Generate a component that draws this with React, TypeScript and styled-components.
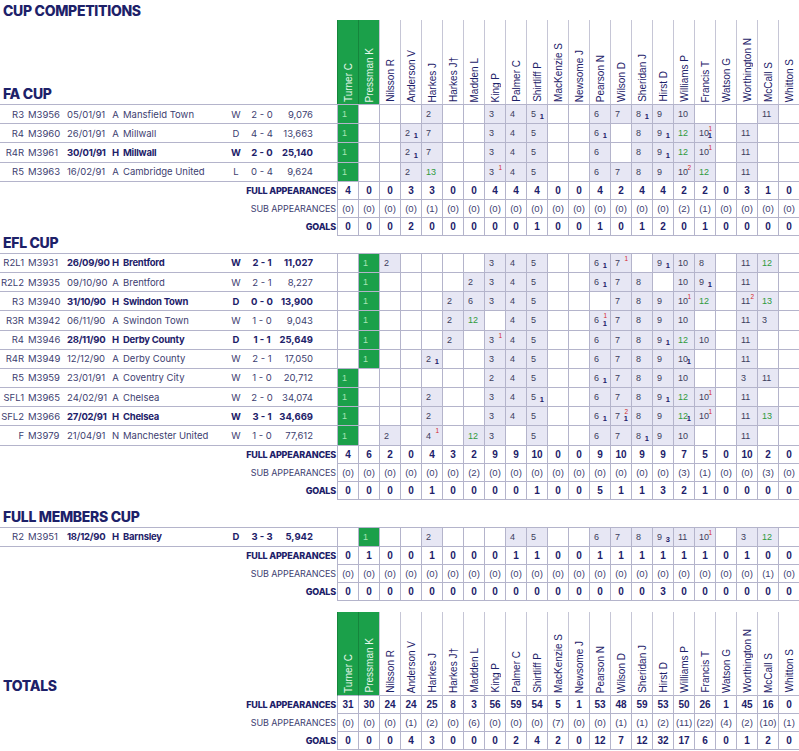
import styled, { createGlobalStyle } from "styled-components"

const NAVY = "#1d2169"
const TEXT = "#3d4070"
const LINE = "#b4b4cb"
const GREEN = "#1ba04a"

const GlobalStyle = createGlobalStyle`
  body {
    margin: 0;
    background: #fff;
    font-family: Inter, "Liberation Sans", sans-serif;
  }
`

const players = [
    "Turner C", "Pressman K", "Nilsson R", "Anderson V", "Harkes J", "Harkes J†",
    "Madden L", "King P", "Palmer C", "Shirtliff P", "MacKenzie S", "Newsome J",
    "Pearson N", "Wilson D", "Sheridan J", "Hirst D", "Williams P", "Francis T",
    "Watson G", "Worthington N", "McCall S", "Whitton S",
]

interface Match {
    round: string
    no: string
    date: string
    venue: string
    opp: string
    res: string
    score: string
    att: string
    cells: string
}

interface Totals {
    full: string
    sub: string
    goals: string
}

const faCup: Match[] = [
    { round: "R3", no: "M3956", date: "05/01/91", venue: "A", opp: "Mansfield Town", res: "W", score: "2 - 0", att: "9,076", cells: "1 . . . 2 . . 3 4 5_1 . . 6 7 8_1 9 10 . . . 11 ." },
    { round: "R4", no: "M3960", date: "26/01/91", venue: "A", opp: "Millwall", res: "D", score: "4 - 4", att: "13,663", cells: "1 . . 2_1 7 . . 3 4 5 . . 6_1 . 8 9_1 g12 10^1_1 . 11 . ." },
    { round: "R4R", no: "M3961", date: "30/01/91", venue: "H", opp: "Millwall", res: "W", score: "2 - 0", att: "25,140", cells: "1 . . 2_1 7 . . 3 4 5 . . 6 . 8 9_1 g12 10^1 . 11 . ." },
    { round: "R5", no: "M3963", date: "16/02/91", venue: "A", opp: "Cambridge United", res: "L", score: "0 - 4", att: "9,624", cells: "1 . . 2 g13 . . 3^1 4 5 . . 6 7 8 9 10^2 g12 . 11 . ." },
]

const eflCup: Match[] = [
    { round: "R2L1", no: "M3931", date: "26/09/90", venue: "H", opp: "Brentford", res: "W", score: "2 - 1", att: "11,027", cells: ". 1 2 . . . . 3 4 5 . . 6_1 7^1 . 9_1 10 8 . 11 g12 ." },
    { round: "R2L2", no: "M3935", date: "09/10/90", venue: "A", opp: "Brentford", res: "W", score: "2 - 1", att: "8,227", cells: ". 1 . . . . 2 3 4 5 . . 6_1 7 8 . 10 9_1 . 11 . ." },
    { round: "R3", no: "M3940", date: "31/10/90", venue: "H", opp: "Swindon Town", res: "D", score: "0 - 0", att: "13,900", cells: ". 1 . . . 2 6 3 4 5 . . . 7 8 9 10^1 g12 . 11^2 g13 ." },
    { round: "R3R", no: "M3942", date: "06/11/90", venue: "A", opp: "Swindon Town", res: "W", score: "1 - 0", att: "9,043", cells: ". 1 . . . 2 g12 . 4 5 . . 6^1_1 7 8 9 10 . . 11 3 ." },
    { round: "R4", no: "M3946", date: "28/11/90", venue: "H", opp: "Derby County", res: "D", score: "1 - 1", att: "25,649", cells: ". 1 . . . 2 . 3^1 4 5 . . 6 7 8 9_1 g12 10 . 11 . ." },
    { round: "R4R", no: "M3949", date: "12/12/90", venue: "A", opp: "Derby County", res: "W", score: "2 - 1", att: "17,050", cells: ". 1 . . 2_1 . . 3 4 5 . . 6 7 8 9 10_1 . . 11 . ." },
    { round: "R5", no: "M3959", date: "23/01/91", venue: "A", opp: "Coventry City", res: "W", score: "1 - 0", att: "20,712", cells: "1 . . . . . . 2 4 5 . . 6_1 7 8 9 10 . . 3 11 ." },
    { round: "SFL1", no: "M3965", date: "24/02/91", venue: "A", opp: "Chelsea", res: "W", score: "2 - 0", att: "34,074", cells: "1 . . . 2 . . 3 4 5_1 . . 6 7 8 9_1 g12 10^1 . 11 . ." },
    { round: "SFL2", no: "M3966", date: "27/02/91", venue: "H", opp: "Chelsea", res: "W", score: "3 - 1", att: "34,669", cells: "1 . . . 2 . . 3 4 5 . . 6_1 7^2_1 8 9 g12_1 10^1 . 11 g13 ." },
    { round: "F", no: "M3979", date: "21/04/91", venue: "N", opp: "Manchester United", res: "W", score: "1 - 0", att: "77,612", cells: "1 . 2 . 4^1 . g12 3 . 5 . . 6 7 8_1 9 10 . . 11 . ." },
]

const fmCup: Match[] = [
    { round: "R2", no: "M3951", date: "18/12/90", venue: "H", opp: "Barnsley", res: "D", score: "3 - 3", att: "5,942", cells: ". 1 . . 2 . . . 4 5 . . 6 7 8 9_3 11 10^1 . 3 g12 ." },
]

const faTotals: Totals = {
    full: "4 0 0 3 3 0 0 4 4 4 0 0 4 2 4 4 2 2 0 3 1 0",
    sub: "0 0 0 0 1 0 0 0 0 0 0 0 0 0 0 0 2 1 0 0 0 0",
    goals: "0 0 0 2 0 0 0 0 0 1 0 0 1 0 1 2 0 1 0 0 0 0",
}
const eflTotals: Totals = {
    full: "4 6 2 0 4 3 2 9 9 10 0 0 9 10 9 9 7 5 0 10 2 0",
    sub: "0 0 0 0 0 0 2 0 0 0 0 0 0 0 0 0 3 1 0 0 3 0",
    goals: "0 0 0 0 1 0 0 0 0 1 0 0 5 1 1 3 2 1 0 0 0 0",
}
const fmTotals: Totals = {
    full: "0 1 0 0 1 0 0 0 1 1 0 0 1 1 1 1 1 1 0 1 0 0",
    sub: "0 0 0 0 0 0 0 0 0 0 0 0 0 0 0 0 0 0 0 0 1 0",
    goals: "0 0 0 0 0 0 0 0 0 0 0 0 0 0 0 3 0 0 0 0 0 0",
}
const grandTotals: Totals = {
    full: "31 30 24 24 25 8 3 56 59 54 5 1 53 48 59 53 50 26 1 45 16 0",
    sub: "0 0 0 1 2 0 6 0 0 0 7 0 0 1 1 2 11 22 4 2 10 1",
    goals: "0 0 0 4 3 0 0 0 2 4 2 0 12 7 12 32 17 6 0 1 2 0",
}

const Page = styled.div`
    width: 799px;
    display: flex;
    flex-direction: column;
`

const Title = styled.h1`
    margin: 0;
    height: 20px;
    padding-left: 3px;
    font-size: 14px;
    line-height: 21px;
    font-weight: 800;
    letter-spacing: -0.3px;
    color: ${NAVY};
`

const Row = styled.div<{ $h: number }>`
    display: grid;
    grid-template-columns: 337px repeat(22, 21px);
    height: ${p => p.$h}px;
    box-sizing: border-box;
`

const HeaderRow = styled(Row)<{ $ruled: boolean }>`
    border-bottom: ${p => (p.$ruled ? `1px solid ${LINE}` : "none")};
`

const SectionTitle = styled.h2<{ $h?: number; $ruled?: boolean }>`
    margin: 0;
    height: ${p => (p.$h ? `${p.$h}px` : "auto")};
    display: flex;
    align-items: flex-end;
    padding: 0 0 3px 3px;
    box-sizing: border-box;
    font-size: 14px;
    line-height: 1;
    font-weight: 800;
    letter-spacing: -0.3px;
    color: ${NAVY};
    border-bottom: ${p => (p.$ruled ? `1px solid ${LINE}` : "none")};
`

const NameCell = styled.div<{ $keeper: boolean; $boxed: boolean }>`
    display: flex;
    align-items: flex-end;
    justify-content: center;
    padding-bottom: 2px;
    border-left: 1px solid ${p => (p.$keeper ? "#15853c" : "#c6c6d6")};
    border-bottom: ${p => (p.$boxed ? `1px solid ${LINE}` : "none")};
    background: ${p => (p.$keeper ? GREEN : "transparent")};
    color: ${p => (p.$keeper ? "#e6f7ea" : NAVY)};
`

const NameText = styled.span`
    writing-mode: vertical-rl;
    text-orientation: sideways;
    transform: rotate(180deg);
    font-family: "Liberation Sans", Arial, sans-serif;
    font-size: 10px;
    white-space: nowrap;
`

const MatchRow = styled(Row)`
    border-bottom: 1px solid ${LINE};
`

const MatchInfo = styled.div<{ $home: boolean }>`
    display: grid;
    grid-template-columns: 24px 42px 160px 20px 32px 35px;
    align-items: center;
    font-size: 9.5px;
    color: ${p => (p.$home ? NAVY : TEXT)};
    white-space: nowrap;
`

const Round = styled.span`
    text-align: right;
    color: ${TEXT};
`

const MatchNo = styled.span`
    padding-left: 4px;
    color: ${TEXT};
`

const Fixture = styled.span<{ $home: boolean }>`
    display: flex;
    align-items: center;
    gap: 4px;
    padding-left: 1px;
    font-weight: ${p => (p.$home ? 700 : 400)};
    letter-spacing: ${p => (p.$home ? "-0.25px" : "0")};
`

const DateText = styled.span`
    width: 41px;
`

const Venue = styled.span`
    width: 7px;
    text-align: center;
`

const Field = styled.span<{ $home: boolean; $align: string }>`
    font-weight: ${p => (p.$home ? 700 : 400)};
    text-align: ${p => p.$align};
`

const PlayerCell = styled.div<{ $fill: "none" | "shade" | "keeper" }>`
    position: relative;
    display: flex;
    align-items: center;
    padding-left: 4px;
    border-left: 1px solid ${LINE};
    background: ${p => (p.$fill === "keeper" ? GREEN : p.$fill === "shade" ? "#e7e7f4" : "transparent")};
    color: ${p => (p.$fill === "keeper" ? "#a7e4b6" : "#3c3d5c")};
    font-family: "Liberation Sans", Arial, sans-serif;
    font-size: 9px;
`

const Num = styled.span<{ $sub: boolean }>`
    color: ${p => (p.$sub ? "#2f9a3d" : "inherit")};
`

const Booked = styled.span`
    position: absolute;
    top: 1px;
    right: 3px;
    font-size: 6.5px;
    color: #d42a2a;
`

const Scored = styled.span`
    position: absolute;
    bottom: 2px;
    right: 3px;
    font-size: 7.5px;
    font-weight: 700;
    color: ${NAVY};
`

const SumLabel = styled.div<{ $bold: boolean }>`
    text-align: right;
    padding-right: 1px;
    font-size: 9px;
    line-height: 18px;
    font-weight: ${p => (p.$bold ? 800 : 400)};
    letter-spacing: ${p => (p.$bold ? "-0.2px" : "-0.1px")};
    color: ${p => (p.$bold ? NAVY : TEXT)};
`

const SumCell = styled.div<{ $bold: boolean; $top: boolean }>`
    border-left: 1px solid ${LINE};
    border-bottom: 1px solid ${LINE};
    border-top: ${p => (p.$top ? `1px solid ${LINE}` : "none")};
    text-align: center;
    line-height: 17px;
    font-family: "Liberation Sans", Arial, sans-serif;
    font-size: ${p => (p.$bold ? "10px" : "9.5px")};
    font-weight: ${p => (p.$bold ? 700 : 400)};
    color: ${p => (p.$bold ? NAVY : TEXT)};
`

const Gap = styled.div<{ $h: number }>`
    height: ${p => p.$h}px;
`

function Names({ heading, ruled }: { heading: string; ruled: boolean }) {
    return (
        <HeaderRow $h={ruled ? 85 : 84} $ruled={ruled}>
            <SectionTitle>{heading}</SectionTitle>
            {players.map((p, i) => (
                <NameCell key={p} $keeper={i < 2} $boxed={!ruled}>
                    <NameText>{p}</NameText>
                </NameCell>
            ))}
        </HeaderRow>
    )
}

function Cell({ token, col }: { token: string; col: number }) {
    if (token === ".") return <PlayerCell $fill="none" />
    const sub = token.startsWith("g")
    const [head, scored] = (sub ? token.slice(1) : token).split("_")
    const [num, booked] = head.split("^")
    return (
        <PlayerCell $fill={col < 2 ? "keeper" : "shade"}>
            <Num $sub={sub}>{num}</Num>
            {booked && <Booked>{booked}</Booked>}
            {scored && <Scored>{scored}</Scored>}
        </PlayerCell>
    )
}

function Matches({ rows }: { rows: Match[] }) {
    return (
        <>
            {rows.map(m => {
                const home = m.venue === "H"
                return (
                    <MatchRow key={m.no} $h={19.2}>
                        <MatchInfo $home={home}>
                            <Round>{m.round}</Round>
                            <MatchNo>{m.no}</MatchNo>
                            <Fixture $home={home}>
                                <DateText>{m.date}</DateText>
                                <Venue>{m.venue}</Venue>
                                <span>{m.opp}</span>
                            </Fixture>
                            <Field $home={home} $align="center">{m.res}</Field>
                            <Field $home={home} $align="center">{m.score}</Field>
                            <Field $home={home} $align="right">{m.att}</Field>
                        </MatchInfo>
                        {m.cells.split(" ").map((t, i) => (
                            <Cell key={i} token={t} col={i} />
                        ))}
                    </MatchRow>
                )
            })}
        </>
    )
}

function Summary({ t, top = false }: { t: Totals; top?: boolean }) {
    const lines: [string, string, boolean][] = [
        ["FULL APPEARANCES", t.full, true],
        ["SUB APPEARANCES", t.sub, false],
        ["GOALS", t.goals, true],
    ]
    return (
        <>
            {lines.map(([label, vals, bold], r) => (
                <Row key={label} $h={18}>
                    <SumLabel $bold={bold}>{label}</SumLabel>
                    {vals.split(" ").map((v, i) => (
                        <SumCell key={i} $bold={bold} $top={top && r === 0}>
                            {bold ? v : `(${v})`}
                        </SumCell>
                    ))}
                </Row>
            ))}
        </>
    )
}

export default function App() {
    return (
        <Page>
            <GlobalStyle />
            <Title>CUP COMPETITIONS</Title>
            <Names heading="FA CUP" ruled />
            <Matches rows={faCup} />
            <Summary t={faTotals} />

            <SectionTitle $h={18} $ruled>EFL CUP</SectionTitle>
            <Matches rows={eflCup} />
            <Summary t={eflTotals} />

            <SectionTitle $h={28} $ruled>FULL MEMBERS CUP</SectionTitle>
            <Matches rows={fmCup} />
            <Summary t={fmTotals} />

            <Gap $h={11} />
            <Names heading="TOTALS" ruled={false} />
            <Summary t={grandTotals} />
        </Page>
    )
}
